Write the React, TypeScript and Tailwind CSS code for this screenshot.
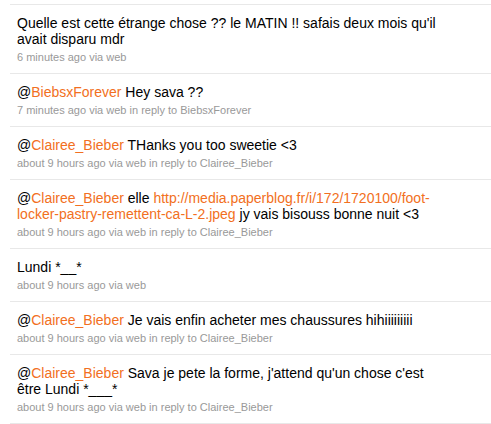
const orange = 'text-[#f26f21]'

type Part = { t: string; link?: boolean }
interface Tweet {
  parts: Array<Part>
  time: string
  reply?: string
}

const tweets: Array<Tweet> = [
  {
    parts: [
      {
        t: "Quelle est cette étrange chose ?? le MATIN !! safais deux mois qu'il avait disparu mdr",
      },
    ],
    time: '6 minutes ago',
  },
  {
    parts: [{ t: '@' }, { t: 'BiebsxForever', link: true }, { t: ' Hey sava ??' }],
    time: '7 minutes ago',
    reply: 'BiebsxForever',
  },
  {
    parts: [
      { t: '@' },
      { t: 'Clairee_Bieber', link: true },
      { t: ' THanks you too sweetie <3' },
    ],
    time: 'about 9 hours ago',
    reply: 'Clairee_Bieber',
  },
  {
    parts: [
      { t: '@' },
      { t: 'Clairee_Bieber', link: true },
      { t: ' elle ' },
      {
        t: 'http://media.paperblog.fr/i/172/1720100/foot-locker-pastry-remettent-ca-L-2.jpeg',
        link: true,
      },
      { t: ' jy vais bisouss bonne nuit <3' },
    ],
    time: 'about 9 hours ago',
    reply: 'Clairee_Bieber',
  },
  {
    parts: [{ t: 'Lundi *__*' }],
    time: 'about 9 hours ago',
  },
  {
    parts: [
      { t: '@' },
      { t: 'Clairee_Bieber', link: true },
      { t: ' Je vais enfin acheter mes chaussures hihiiiiiiiii' },
    ],
    time: 'about 9 hours ago',
    reply: 'Clairee_Bieber',
  },
  {
    parts: [
      { t: '@' },
      { t: 'Clairee_Bieber', link: true },
      { t: " Sava je pete la forme, j'attend qu'un chose c'est être Lundi *___*" },
    ],
    time: 'about 9 hours ago',
    reply: 'Clairee_Bieber',
  },
]

const App = () => {
  return (
    <div
      className="min-h-[424px] bg-white pt-1 pl-[10px]"
      style={{ fontFamily: '"Liberation Sans", Arial, sans-serif' }}
    >
      <ul className="border-t border-[#e8e8e8]">
        {tweets.map((tw, i) => (
          <li
            key={i}
            className="border-b border-[#e8e8e8] pt-[10px] pb-2 pl-[7px] pr-[47px]"
          >
            <p className="text-[14px] leading-4 text-black break-words">
              {tw.parts.map((p, j) =>
                p.link ? (
                  <a key={j} className={orange}>
                    {p.t}
                  </a>
                ) : (
                  <span key={j}>{p.t}</span>
                )
              )}
            </p>
            <p className="mt-[2px] text-[11px] leading-4 text-[#999999]">
              {tw.time} via web
              {tw.reply && <span> in reply to {tw.reply}</span>}
            </p>
          </li>
        ))}
      </ul>
    </div>
  )
}

export default App
